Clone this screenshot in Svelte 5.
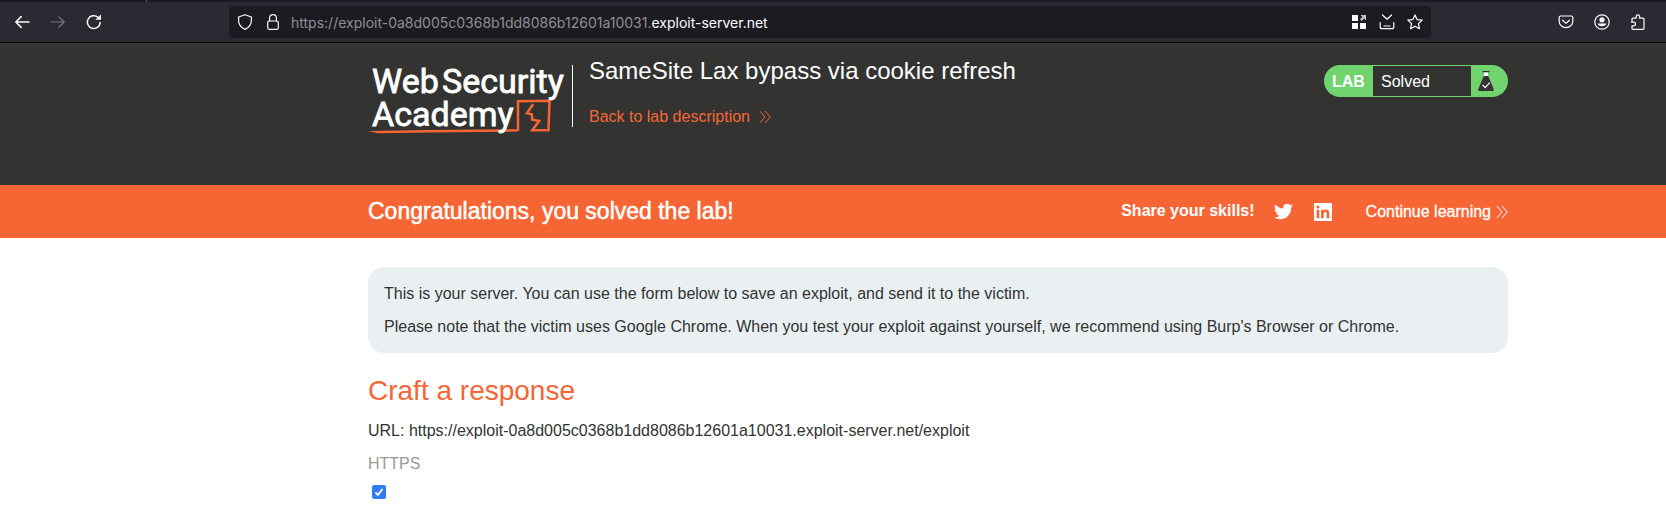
<script>
  let https = $state(true);
</script>

{#snippet chevrons()}
  <svg class="chevrons" viewBox="0 0 12 14" width="12" height="14" aria-hidden="true">
    <path d="M.8 1 6 7 .8 13M6 1l5.2 6L6 13" />
  </svg>
{/snippet}

<div class="tabs"></div>
<nav class="toolbar">
  <div class="group">
    <button aria-label="Back">
      <svg class="icon" viewBox="0 0 16 16"><path class="bold" d="M15 8H1.8M7.2 2.6 1.8 8l5.4 5.4" /></svg>
    </button>
    <button class="dim" aria-label="Forward" disabled>
      <svg class="icon" viewBox="0 0 16 16"><path d="M1 8h13.2M8.8 2.6 14.2 8l-5.4 5.4" /></svg>
    </button>
    <button aria-label="Reload">
      <svg class="icon" viewBox="0 0 16 16"><path class="bold" d="M14.2 8.4A6.4 6.4 0 1 1 11.8 3.1" /><path class="fill" d="M15 .6v5.2H9.4z" /></svg>
    </button>
  </div>
  <div class="address">
    <button class="small" aria-label="Tracking protection">
      <svg class="icon" viewBox="0 0 16 16"><path d="M8 .7 14.4 3v3.6c0 3.8-2.4 7-6.4 8.8C4 13.600 1.600 10.400 1.600 6.600V3z" /></svg>
    </button>
    <button class="small" aria-label="Connection security">
      <svg class="icon" viewBox="0 0 16 16"><path d="M4.600 7V4.100a3.400 3.400 0 0 1 6.800 0V7" /><rect x="2.700" y="7" width="10.600" height="8.300" rx="1.500" /></svg>
    </button>
    <div class="url" role="textbox" tabindex="0" aria-label="Address">https://exploit-0a8d005c0368b1dd8086b12601a10031.<span>exploit-server.net</span></div>
    <button class="small" aria-label="Apps">
      <svg class="icon" viewBox="0 0 16 16"><path class="fill" d="M1 1h6v6H1zM1 9h6v6H1zM9 9h6v6H9z" /><path class="fill soft" d="M9.500 1H15v5.500l-1.900-1.900L10.700 7 9 5.300l2.400-2.400z" /></svg>
    </button>
    <button class="small" aria-label="Save page">
      <svg class="icon" viewBox="0 0 16 16"><path d="M3.500 1 8 5.200 12.500 1M1.200 8.500v4.200a2 2 0 0 0 2 2h9.600a2 2 0 0 0 2-2V8.500M5 12h6" /></svg>
    </button>
    <button class="small" aria-label="Bookmark">
      <svg class="icon" viewBox="0 0 16 16"><path d="m8 .9 2.100 4.700 5.100.5-3.800 3.500 1.100 5.200L8 12.200l-4.500 2.600 1.100-5.200L.8 6.100l5.100-.5z" /></svg>
    </button>
  </div>
  <div class="group">
    <button aria-label="Pocket">
      <svg class="icon" viewBox="0 0 16 16"><path d="M2.600 2h10.800a1.400 1.400 0 0 1 1.400 1.400v3.800a6.800 6.500 0 0 1-13.600 0V3.400A1.400 1.400 0 0 1 2.600 2z" /><path d="M4.600 6.200 8 9.400l3.400-3.200" /></svg>
    </button>
    <button aria-label="Account">
      <svg class="icon" viewBox="0 0 16 16"><circle cx="8" cy="8" r="7.200" /><circle class="fill" cx="8" cy="5.800" r="2.600" /><path class="fill" d="M3.600 9.500h8.800a4.500 3.500 0 0 1-8.800 0z" /></svg>
    </button>
    <button aria-label="Extensions">
      <svg class="icon" viewBox="0 0 16 16"><path d="M2 7V5.200a1 1 0 0 1 1-1h3.200V2.500a1.700 1.700 0 0 1 3.400 0v1.700H13a1 1 0 0 1 1 1v9.200a1 1 0 0 1-1 1H3a1 1 0 0 1-1-1v-2.600h1.700a1.800 1.800 0 0 0 0-3.600H1.500" /></svg>
    </button>
  </div>
</nav>

<header class="wrap head">
  <a class="logo" href="#academy" aria-label="Web Security Academy">
    <svg viewBox="0 0 204 80" width="204" height="80">
      <path class="flame" d="M0 74 60 73l90-.8-.2 2.400L60 75.400 10 76.200z" />
      <path class="stroke" d="M150 74V44.300l31.500-.6-1 29.500-16.300.1 7-9.300-7-1.200-.3-5.400-5-1.200 6.300-9.200" />
      <g class="words">
        <text x="4" y="36">Web</text>
        <text x="74" y="36">Security</text>
        <text x="4" y="69">Academy</text>
      </g>
    </svg>
  </a>
  <div class="title">
    <h1>SameSite Lax bypass via cookie refresh</h1>
    <a class="back" href="#description">Back to lab description {@render chevrons()}</a>
  </div>
  <div class="badge">
    <strong>LAB</strong>
    <span>Solved</span>
    <svg viewBox="0 0 16 20" width="16" height="20" aria-hidden="true">
      <path class="white" d="M6 1h4v5H6z" />
      <path class="dark" d="M4.500 0h7v1.200h-7zM5.800 5h4.400l5.600 13.200q.4 1.600-1.200 1.800H1.400Q-.2 19.800.2 18.200z" />
      <path class="tick" d="m4.600 14 2.600 2.600 4.600-5" />
    </svg>
  </div>
</header>

<section class="wrap banner">
  <h2>Congratulations, you solved the lab!</h2>
  <strong>Share your skills!</strong>
  <a class="twitter" href="#twitter" aria-label="Twitter">
    <svg viewBox="0 0 24 24" width="19" height="19"><path d="M23.950 4.570a10 10 0 0 1-2.820.780 4.960 4.960 0 0 0 2.160-2.720c-.95.550-2 .950-3.130 1.190a4.920 4.920 0 0 0-8.380 4.480C7.690 8.090 4.070 6.130 1.640 3.160a4.820 4.820 0 0 0-.67 2.480c0 1.710.870 3.210 2.190 4.090a4.900 4.900 0 0 1-2.230-.61v.060a4.920 4.920 0 0 0 3.950 4.830 5 5 0 0 1-2.210.080 4.940 4.940 0 0 0 4.600 3.420A9.870 9.870 0 0 1 0 19.540a13.990 13.990 0 0 0 7.550 2.210c9.050 0 14-7.500 14-13.980 0-.21 0-.42-.02-.63a9.940 9.940 0 0 0 2.420-2.570z" /></svg>
  </a>
  <a class="linkedin" href="#linkedin" aria-label="LinkedIn">
    <svg viewBox="0 0 18 18" width="18" height="18"><path fill-rule="evenodd" d="M1 0h16a1 1 0 0 1 1 1v16a1 1 0 0 1-1 1H1a1 1 0 0 1-1-1V1a1 1 0 0 1 1-1zM2.700 6.800v8.500h2.600V6.800zM4 2.500a1.500 1.500 0 1 0 0 3.100 1.500 1.500 0 0 0 0-3.100zM7 6.800v8.500h2.600v-4.200c0-1.200.4-2.200 1.700-2.200s1.400 1.100 1.400 2.300v4.100h2.600v-4.700c0-2.400-.6-4-3.200-4-1.300 0-2.200.7-2.500 1.400V6.800z" /></svg>
  </a>
  <a class="continue" href="#continue">Continue learning {@render chevrons()}</a>
</section>

<main class="wrap">
  <div class="note">
    <p>This is your server. You can use the form below to save an exploit, and send it to the victim.</p>
    <p>Please note that the victim uses Google Chrome. When you test your exploit against yourself, we recommend using Burp's Browser or Chrome.</p>
  </div>
  <form>
    <h3>Craft a response</h3>
    <p>URL: https://exploit-0a8d005c0368b1dd8086b12601a10031.exploit-server.net/exploit</p>
    <label for="https">HTTPS</label>
    <input id="https" type="checkbox" bind:checked={https} />
  </form>
</main>

<style>
  :global(body) {
    margin: 0;
    background: #fff;
    color: #333332;
    font: 16px/20px "Liberation Sans", Arial, sans-serif;
  }
  h1, h2, h3, p { margin: 0; font-weight: 400; }
  a { color: inherit; text-decoration: none; }
  svg { display: block; flex: none; }

  .tabs {
    height: 2px;
    background: linear-gradient(90deg, #1c1b22 146px, #55545c 146px, #55545c 147px, #1c1b22 147px);
  }
  .toolbar {
    display: flex;
    align-items: center;
    gap: 117px;
    height: 40px;
    padding: 0 10px 0 4px;
    background: #2b2a33;
    border-bottom: 1px solid #0c0c0d;
    color: #fbfbfe;
  }
  .group { display: flex; }
  button {
    display: flex;
    align-items: center;
    justify-content: center;
    width: 36px;
    height: 32px;
    padding: 0;
    border: 0;
    background: none;
    color: inherit;
  }
  button.small { width: 28px; flex: none; }
  button.dim { color: #77767e; }
  .icon {
    width: 16px;
    height: 16px;
    fill: none;
    stroke: currentColor;
    stroke-width: 1.2;
    stroke-linecap: round;
    stroke-linejoin: round;
  }
  .icon .bold { stroke-width: 1.5; }
  .icon .fill { fill: currentColor; stroke: none; }
  .icon .soft { opacity: 0.75; }
  .address {
    display: flex;
    align-items: center;
    flex: 1;
    min-width: 0;
    height: 32px;
    padding: 0 2px;
    border-radius: 4px;
    background: #1c1b22;
  }
  .url {
    flex: 1;
    min-width: 0;
    padding-top: 2px;
    padding-left: 4px;
    overflow: hidden;
    white-space: nowrap;
    color: #8f8e95;
    font-family: Inter, sans-serif;
    font-size: 14px;
  }
  .url span { color: #fbfbfe; }

  .wrap { padding-left: 368px; padding-right: 158px; }
  .head {
    display: flex;
    align-items: flex-start;
    padding-top: 14px;
    padding-bottom: 48px;
    background: #333332;
    color: #fff;
  }
  .logo {
    padding-right: 1px;
    background: linear-gradient(#fff, #fff) right 8px / 1px 62px no-repeat;
  }
  .words { fill: #fff; stroke: #fff; stroke-width: 0.800; font: 400 34px Roboto, sans-serif; }
  .flame { fill: #f66635; }
  .stroke { fill: none; stroke: #f66635; stroke-width: 2.500; }
  .title { flex: 1; padding-left: 16px; }
  h1 { font-size: 24px; line-height: 28px; margin-bottom: 22px; }
  .back, .continue { display: flex; align-items: center; }
  .back { gap: 9px; color: #f66635; }
  .chevrons { fill: none; stroke: currentColor; stroke-width: 1; }
  .badge {
    display: flex;
    align-items: stretch;
    height: 32px;
    margin-top: 8px;
    border-radius: 16px;
    background: #70d36d;
    line-height: 34px;
  }
  .badge strong { width: 41px; padding-left: 8px; }
  .badge span {
    width: 90px;
    margin: 1px 0;
    padding-left: 8px;
    background: #333332;
    line-height: 32px;
  }
  .badge svg { margin: 6px 14px 6px 7px; }
  .white { fill: #fff; }
  .dark { fill: #333332; }
  .tick { fill: none; stroke: #fff; stroke-width: 1.200; }

  .banner {
    display: flex;
    align-items: center;
    min-height: 53px;
    background: #f66635;
    color: #fff;
  }
  h2 { flex: 1; padding-bottom: 2px; font-size: 23px; line-height: 28px; -webkit-text-stroke: 0.500px; }
  .banner strong { padding-bottom: 2px; }
  .banner svg { fill: currentColor; }
  .banner .chevrons { fill: none; }
  .twitter { margin-left: 19px; }
  .linkedin { margin-left: 21px; }
  .continue { gap: 5px; margin-left: 34px; -webkit-text-stroke: 0.300px; }

  main { padding-top: 29px; }
  .note {
    padding: 10px 16px;
    border-radius: 16px;
    background: #eaf0f2;
  }
  p, label { display: block; line-height: 33px; }
  h3 { margin: 20px 0 5px; color: #f66635; font-size: 28px; line-height: 36px; }
  label { color: #999; }
  input {
    display: block;
    appearance: none;
    width: 14px;
    height: 14px;
    margin: 5px 4px;
    border: 1px solid #2f7cf6;
    border-radius: 2px;
  }
  input:checked {
    background: #2f7cf6 url("data:image/svg+xml,%3Csvg xmlns='http://www.w3.org/2000/svg' viewBox='0 0 12 12'%3E%3Cpath d='M2.500 6.500 5 9l4.500-6' fill='none' stroke='white' stroke-width='1.800'/%3E%3C/svg%3E") center / 12px no-repeat;
  }
</style>
